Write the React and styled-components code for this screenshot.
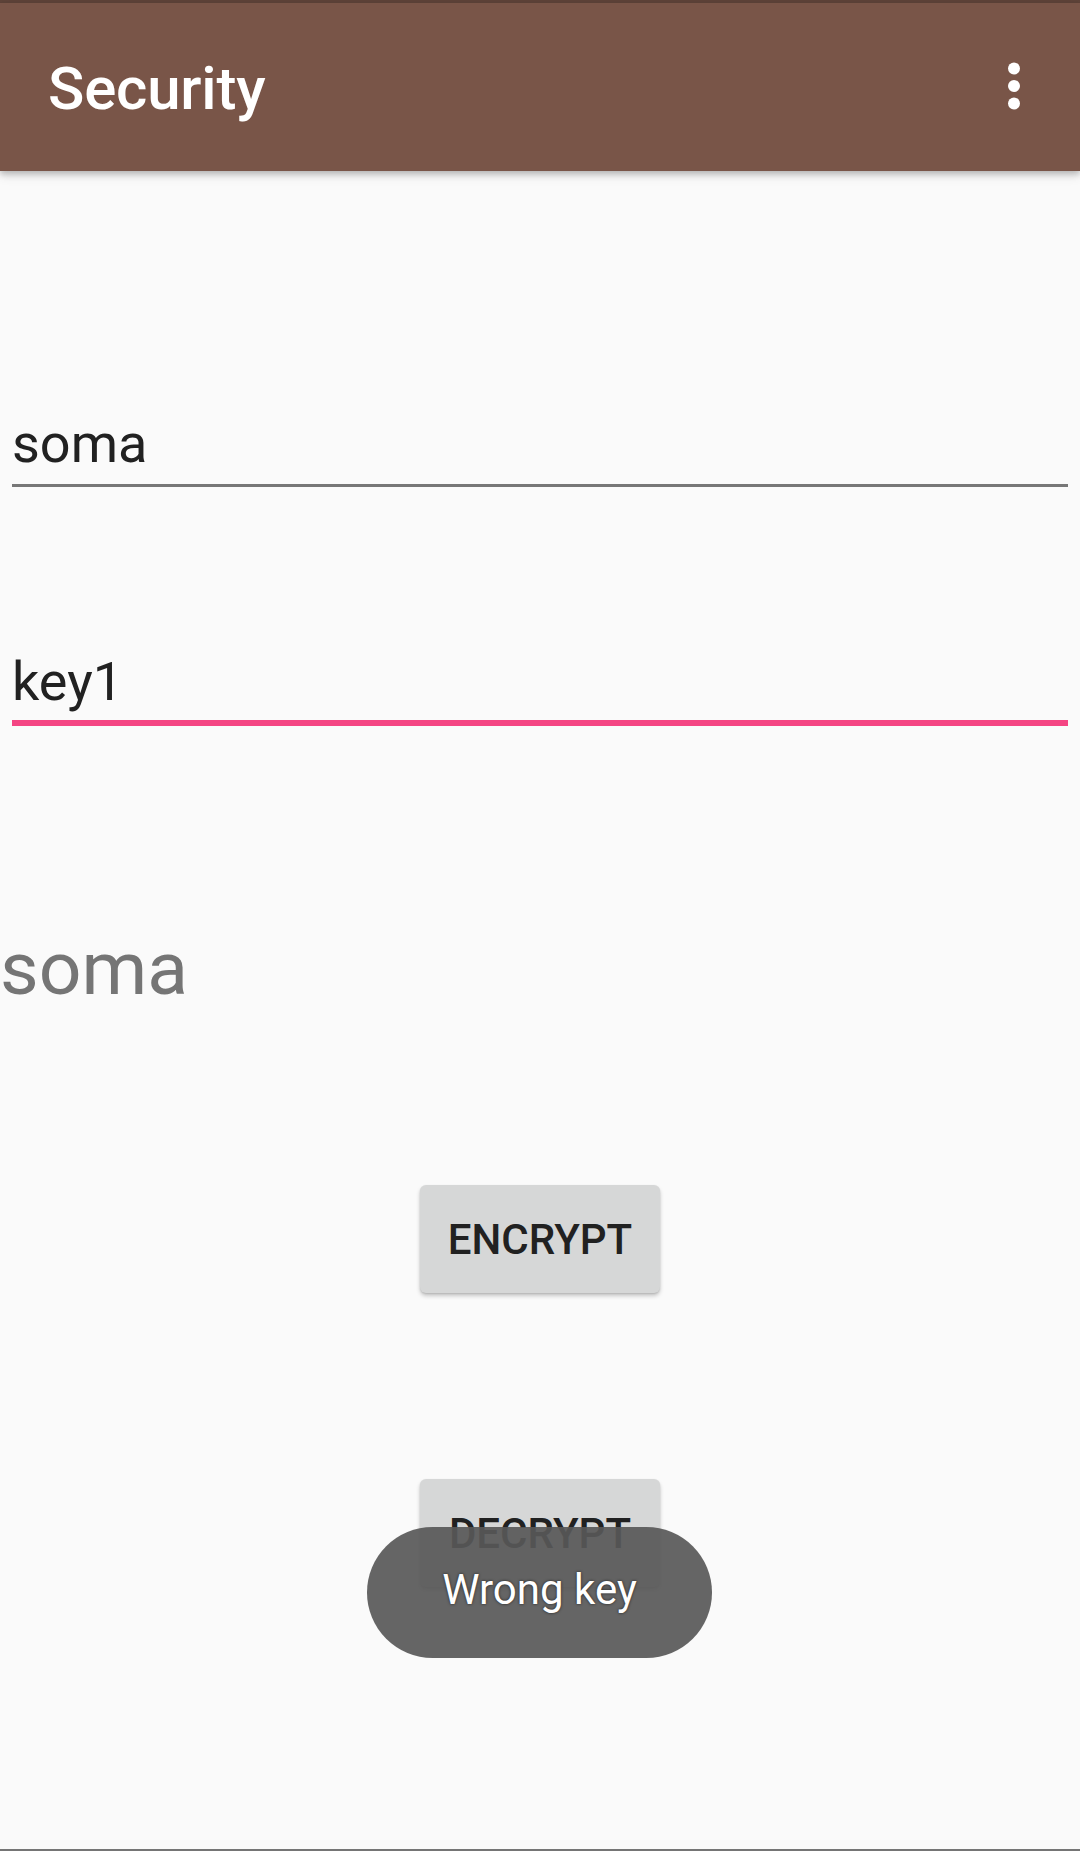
import React from "react";
import styled, { createGlobalStyle } from "styled-components";

const GlobalStyle = createGlobalStyle`
  html, body {
    margin: 0;
    padding: 0;
    background: #fafafa;
    font-family: Roboto, "Noto Sans", sans-serif;
  }
`;

const OverflowIcon = () => (
  <svg width="24" height="60" viewBox="0 0 24 60">
    <circle cx="12" cy="12.5" r="6" fill="#fff" />
    <circle cx="12" cy="30" r="6" fill="#fff" />
    <circle cx="12" cy="47.5" r="6" fill="#fff" />
  </svg>
);

const App = () => {
  return (
    <>
      <GlobalStyle />
      <Screen>
        <StatusEdge />
        <AppBar>
          <Title>Security</Title>
          <MenuButton>
            <OverflowIcon />
          </MenuButton>
        </AppBar>
        <Content>
          <Field>
            <FieldText>soma</FieldText>
          </Field>
          <Field focused>
            <FieldText>key1</FieldText>
          </Field>
          <Result>soma</Result>
          <ButtonRow>
            <Button>ENCRYPT</Button>
          </ButtonRow>
          <ButtonRow gap={186}>
            <Button>DECRYPT</Button>
          </ButtonRow>
          <Toast>Wrong key</Toast>
        </Content>
        <NavEdge />
      </Screen>
    </>
  );
};

const Screen = styled.div`
  position: relative;
  display: flex;
  flex-direction: column;
  height: 1851px;
  overflow: hidden;
  background: #fafafa;
`;

const StatusEdge = styled.div`
  height: 3px;
  background: #5e4339;
`;

const AppBar = styled.header`
  position: relative;
  z-index: 1;
  display: flex;
  align-items: center;
  justify-content: space-between;
  height: 168px;
  padding: 0 54px 0 48px;
  background: #795548;
  box-shadow: 0 3px 6px rgba(0, 0, 0, 0.22), 0 6px 10px rgba(0, 0, 0, 0.08);
`;

const Title = styled.h1`
  margin: 4px 0 0;
  font-size: 60px;
  line-height: 1;
  font-weight: 500;
  letter-spacing: -0.2px;
  color: #fff;
`;

const MenuButton = styled.div`
  display: flex;
  align-items: center;
  margin-top: -2px;
`;

const Content = styled.main`
  position: relative;
  flex: 1;
  display: flex;
  flex-direction: column;
`;

const Field = styled.div`
  margin: ${(p) => (p.focused ? "163px" : "241px")} 12px 0;
  padding-bottom: ${(p) => (p.focused ? "6px" : "8px")};
  border-bottom: ${(p) => (p.focused ? "6px solid #f44583" : "3px solid #777")};
`;

const FieldText = styled.div`
  font-size: 54px;
  line-height: 64px;
  color: #212121;
`;

const Result = styled.div`
  margin-top: 197px;
  font-size: 75px;
  line-height: 91px;
  color: #757575;
`;

const ButtonRow = styled.div`
  display: flex;
  justify-content: center;
  margin-top: ${(p) => p.gap || 171}px;
`;

const Button = styled.div`
  display: flex;
  align-items: center;
  justify-content: center;
  width: 240px;
  height: 108px;
  border-radius: 6px;
  background: #d6d7d7;
  color: #212121;
  font-size: 42px;
  font-weight: 500;
  box-shadow: 0 3px 4px rgba(0, 0, 0, 0.2), 0 1px 2px rgba(0, 0, 0, 0.12);
`;

const Toast = styled.div`
  position: absolute;
  top: 1356px;
  left: 367px;
  width: 345px;
  height: 131px;
  box-sizing: border-box;
  padding-bottom: 6px;
  display: flex;
  align-items: center;
  justify-content: center;
  border-radius: 66px;
  background: rgba(88, 88, 88, 0.92);
  color: #fff;
  font-size: 42px;
  text-shadow: 0 0 3px rgba(0, 0, 0, 0.7);
`;

const NavEdge = styled.div`
  height: 2px;
  background: #757575;
`;

export default App;
